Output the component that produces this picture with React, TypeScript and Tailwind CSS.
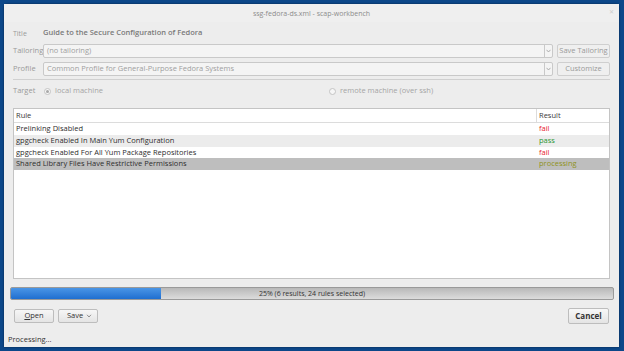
import React from "react";

const font = { fontFamily: '"Open Sans", "DejaVu Sans", sans-serif' };

function Combo({ text }: { text: string }) {
  return (
    <div className="flex h-[14px] flex-1 items-center rounded-[2px] border border-[#c9c9c9] bg-[#f4f4f4]">
      <span className="flex-1 pl-[3px] text-[7.5px] leading-none text-[#a0a0a0]">{text}</span>
      <div className="flex h-full w-[8px] items-center justify-center border-l border-[#c9c9c9]">
        <svg width="5" height="4" viewBox="0 0 5 4">
          <path d="M0.5 0.8 L2.5 3 L4.5 0.8" fill="none" stroke="#9a9a9a" strokeWidth="0.8" />
        </svg>
      </div>
    </div>
  );
}

function GhostButton({ text }: { text: string }) {
  return (
    <div className="flex h-[14px] w-[53px] items-center justify-center rounded-[2px] border border-[#cfcfcf] bg-[#efefef] text-[7.5px] leading-none text-[#9a9a9a]">
      {text}
    </div>
  );
}

function Radio({ checked }: { checked?: boolean }) {
  return (
    <div className="flex h-[7px] w-[7px] items-center justify-center rounded-full border border-[#c4c4c4] bg-[#f6f6f6]">
      {checked && <div className="h-[3px] w-[3px] rounded-full bg-[#a8a8a8]" />}
    </div>
  );
}

const rows = [
  { rule: "Prelinking Disabled", result: "fail", color: "text-[#e8212c]", bg: "bg-white", h: "h-[12px]" },
  { rule: "gpgcheck Enabled In Main Yum Configuration", result: "pass", color: "text-[#2a9632]", bg: "bg-[#ececec]", h: "h-[12px]" },
  { rule: "gpgcheck Enabled For All Yum Package Repositories", result: "fail", color: "text-[#e8212c]", bg: "bg-white", h: "h-[11px]" },
  { rule: "Shared Library Files Have Restrictive Permissions", result: "processing", color: "text-[#8f9221]", bg: "bg-[#bebebe]", h: "h-[12px]" },
];

export default function App() {
  return (
    <div
      className="h-[351px] w-[624px] overflow-hidden bg-[#0c4789] pl-[4px] pt-[4px]"
      style={font}
    >
      <div className="flex h-[343px] w-[615px] flex-col rounded-t-[3px] bg-[#ededed] shadow-[0_0_2px_rgba(0,0,0,0.6)]">
        {/* titlebar */}
        <div className="relative flex h-[18px] items-center justify-center bg-[#efefef]">
          <span className="text-[7px] leading-none text-[#8c8c8c]">ssg-fedora-ds.xml - scap-workbench</span>
          <span className="absolute right-[5px] top-[5px] text-[6px] leading-none text-[#cccccc]">✕</span>
        </div>

        <div className="flex flex-col pl-[9px] pr-[9px]">
          {/* Title */}
          <div className="mt-[6px] flex h-[10px] items-center">
            <span className="w-[30px] text-[7px] leading-none text-[#9a9a9a]">Title</span>
            <span className="text-[7.5px] font-semibold leading-none text-[#7a7a7a]">
              Guide to the Secure Configuration of Fedora
            </span>
          </div>
          {/* Tailoring */}
          <div className="mt-[6px] flex h-[14px] items-center gap-[4px]">
            <span className="w-[26px] text-[7.5px] leading-none text-[#9a9a9a]">Tailoring</span>
            <Combo text="(no tailoring)" />
            <GhostButton text="Save Tailoring" />
          </div>
          {/* Profile */}
          <div className="mt-[4px] flex h-[14px] items-center gap-[4px]">
            <span className="w-[26px] text-[7.5px] leading-none text-[#9a9a9a]">Profile</span>
            <Combo text="Common Profile for General-Purpose Fedora Systems" />
            <GhostButton text="Customize" />
          </div>
          <div className="mt-[3px] h-px bg-[#d0d0d0]" />
          {/* Target */}
          <div className="mt-[7px] flex h-[8px] items-center">
            <span className="w-[31px] text-[7.5px] leading-none text-[#9a9a9a]">Target</span>
            <Radio checked />
            <span className="ml-[4px] w-[274px] text-[7.5px] leading-none text-[#a5a5a5]">local machine</span>
            <Radio />
            <span className="ml-[4px] text-[7.5px] leading-none text-[#a5a5a5]">remote machine (over ssh)</span>
          </div>
          {/* Table */}
          <div className="mt-[13px] flex h-[171px] flex-col border border-[#c4c4c4] bg-white">
            <div className="flex h-[14px] border-b border-[#dcdcdc]">
              <div className="flex flex-1 items-center pl-[2px] text-[7.5px] leading-none text-[#3a3a3a]">Rule</div>
              <div className="flex w-[73px] items-center border-l border-[#dcdcdc] pl-[2px] text-[7.5px] leading-none text-[#3a3a3a]">Result</div>
            </div>
            {rows.map((r) => (
              <div key={r.rule} className={`flex ${r.h} items-center ${r.bg}`}>
                <div className="flex-1 pl-[2px] text-[7.5px] leading-none text-[#2e2e2e]">{r.rule}</div>
                <div className={`w-[73px] pl-[3px] text-[7.5px] leading-none ${r.color}`}>{r.result}</div>
              </div>
            ))}
          </div>
        </div>

        {/* Progress */}
        <div className="ml-[6px] mr-[5px] mt-[8px] flex h-[13px] overflow-hidden rounded-[2px] border border-[#9a9a9a] bg-gradient-to-b from-[#b9b9b9] to-[#dcdcdc]">
          <div className="relative flex w-full items-center">
            <div className="absolute left-0 top-0 h-full w-[150px] bg-gradient-to-b from-[#4a95e6] to-[#1f6fd0]" />
            <span className="relative w-full text-center text-[7px] leading-none text-[#333]">
              25% (6 results, 24 rules selected)
            </span>
          </div>
        </div>

        {/* buttons */}
        <div className="mt-[8px] flex items-center pl-[10px] pr-[10px]">
          <div className="flex h-[14px] w-[40px] items-center justify-center rounded-[2px] border border-[#bdbdbd] bg-gradient-to-b from-[#f6f6f6] to-[#e4e4e4] text-[7.5px] leading-none text-[#333]">
            <span><span className="underline">O</span>pen</span>
          </div>
          <div className="ml-[4px] flex h-[14px] w-[40px] items-center rounded-[2px] border border-[#bdbdbd] bg-gradient-to-b from-[#f6f6f6] to-[#e4e4e4] pl-[8px] text-[7.5px] leading-none text-[#333]">
            <span className="flex-1">Save</span>
            <svg width="6" height="4" viewBox="0 0 6 4" className="mr-[5px]">
              <path d="M1 0.8 L3 3 L5 0.8" fill="none" stroke="#777" strokeWidth="0.8" />
            </svg>
          </div>
          <div className="ml-auto flex h-[16px] w-[41px] items-center justify-center rounded-[2px] border border-[#bdbdbd] bg-gradient-to-b from-[#f8f8f8] to-[#e4e4e4] text-[8px] font-bold leading-none text-[#333]">
            Cancel
          </div>
        </div>

        {/* status */}
        <div className="mt-auto mb-[4px] pl-[4px] text-[7.5px] leading-none text-[#333]">Processing...</div>
      </div>
    </div>
  );
}
